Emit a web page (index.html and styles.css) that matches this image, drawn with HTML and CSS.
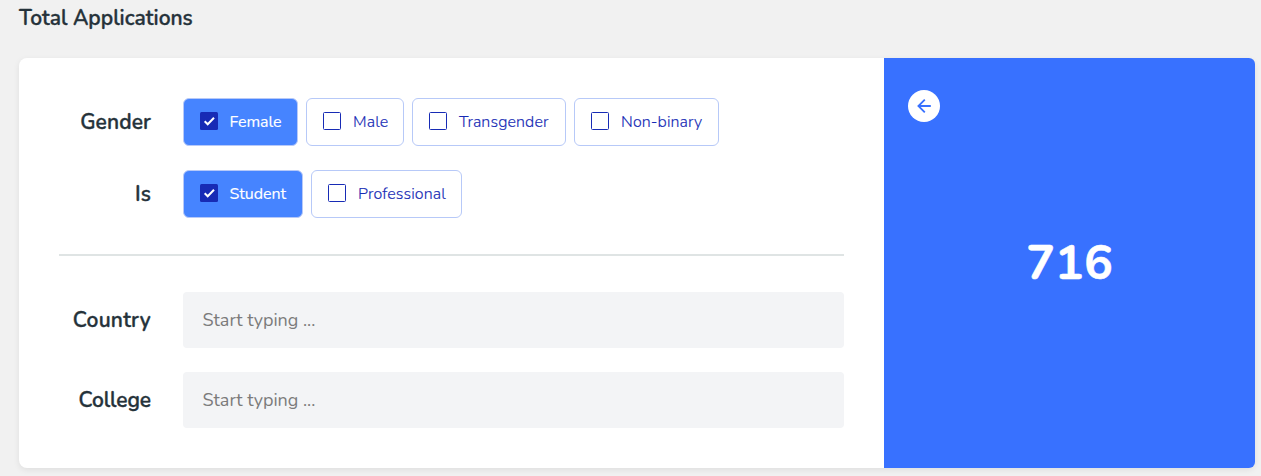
FILE: index.html
```html
<!DOCTYPE html>
<html lang="en">
<head>
<meta charset="utf-8">
<title>Total Applications</title>
<link rel="stylesheet" href="styles.css">
</head>
<body>
<h1 class="title">Total Applications</h1>
<main class="card">
  <section class="filters">
    <div class="row">
      <div class="label">Gender</div>
      <div class="chips">
        <div class="chip checked female"><span class="box"><svg viewBox="0 0 18 18"><path d="M4.7 9.2 7.7 12.2 14 5.7"/></svg></span><span class="name">Female</span></div>
        <div class="chip male"><span class="box"></span><span class="name">Male</span></div>
        <div class="chip transgender"><span class="box"></span><span class="name">Transgender</span></div>
        <div class="chip nonbinary"><span class="box"></span><span class="name">Non-binary</span></div>
      </div>
    </div>
    <div class="row">
      <div class="label">Is</div>
      <div class="chips">
        <div class="chip checked student"><span class="box"><svg viewBox="0 0 18 18"><path d="M4.7 9.2 7.7 12.2 14 5.7"/></svg></span><span class="name">Student</span></div>
        <div class="chip professional"><span class="box"></span><span class="name">Professional</span></div>
      </div>
    </div>
    <hr class="divider">
    <div class="row">
      <label class="label country" for="country">Country</label>
      <input class="field" id="country" type="text" placeholder="Start typing ...">
    </div>
    <div class="row">
      <label class="label college" for="college">College</label>
      <input class="field" id="college" type="text" placeholder="Start typing ...">
    </div>
  </section>
  <aside class="result">
    <button class="back" aria-label="Back"><svg viewBox="0 0 32 32"><path d="M22.8 16H10.5M16.8 9.6 10.4 16l6.4 6.4"/></svg></button>
    <div class="total">716</div>
  </aside>
</main>
</body>
</html>
```
FILE: styles.css
```css
* { box-sizing: border-box; }
body {
  margin: 0;
  height: 476px;
  overflow: hidden;
  padding: 4px 6px 8px 19px;
  background: #f1f1f1;
  color: #25323a;
  font-family: Nunito, Lato, sans-serif;
}
.title {
  margin: 0 0 26px;
  font-size: 21px;
  line-height: 28px;
  font-weight: 600;
  -webkit-text-stroke: 0.35px currentColor;
}
.card {
  display: flex;
  height: 410px;
  border-radius: 8px;
  background: #fff;
  box-shadow: 0 2px 6px rgba(0, 0, 0, 0.08);
}
.filters { width: 865px; padding: 40px; }
.row { display: flex; align-items: center; margin-bottom: 24px; }
.label {
  width: 92px;
  margin-right: 32px;
  text-align: right;
  font-size: 21px;
  line-height: 28px;
  font-weight: 600;
  letter-spacing: 0.1px;
  -webkit-text-stroke: 0.35px currentColor;
}
.country { letter-spacing: 0.25px; }
.college { letter-spacing: -0.1px; }
.chips { display: flex; gap: 8px; }
.chip {
  display: flex;
  align-items: center;
  gap: 12px;
  height: 48px;
  padding: 0 0 2px 16px;
  border: 1px solid #b7c9f8;
  border-radius: 6px;
  color: #172bb5;
  font-size: 16px;
  font-weight: 300;
  letter-spacing: 0.1px;
  white-space: nowrap;
  -webkit-text-stroke: 0.15px currentColor;
}
.chip.checked {
  background: #4684ff;
  color: #fff;
  font-weight: 400;
  letter-spacing: -0.05px;
}
.name { padding-top: 1px; line-height: 22px; }
.checked .name { margin-left: -0.5px; }
.female { width: 115px; }
.male { width: 98px; }
.transgender { width: 154px; }
.nonbinary { width: 145px; }
.student { width: 120px; }
.professional { width: 151px; }
.box {
  flex: none;
  width: 18px;
  height: 18px;
  border: 1px solid #172bb5;
  border-radius: 1.5px;
}
.checked .box { border: 0; background: #172bb5; }
.box svg { display: block; width: 18px; height: 18px; fill: none; stroke: #fff; stroke-width: 2; }
.divider { height: 2px; margin: 36px 0; border: 0; background: #dfe4e4; }
.field {
  flex: 1;
  height: 56px;
  padding: 0 19.5px;
  border: 0;
  border-radius: 4px;
  background: #f3f4f6;
  font-family: inherit;
  font-size: 18px;
}
.field::placeholder { color: #7b7b7b; opacity: 1; }
.result {
  display: flex;
  flex-direction: column;
  flex: 1;
  padding: 32px 24px;
  border-radius: 0 6px 6px 0;
  background: #3871ff;
  color: #fff;
}
.back {
  width: 32px;
  height: 32px;
  padding: 0;
  border: 0;
  border-radius: 50%;
  background: #fff;
}
.back svg { display: block; fill: none; stroke: #3871ff; stroke-width: 1.8; }
.total {
  margin-top: 113px;
  text-align: center;
  font-size: 48px;
  line-height: 56px;
  font-weight: 700;
  -webkit-text-stroke: 0.5px currentColor;
}
```
